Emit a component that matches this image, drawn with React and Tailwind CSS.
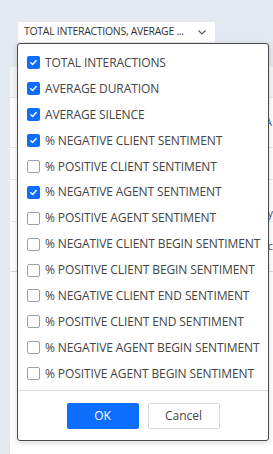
import { useState } from 'react'

const OPTIONS = [
  ['TOTAL INTERACTIONS', true],
  ['AVERAGE DURATION', true],
  ['AVERAGE SILENCE', true],
  ['% NEGATIVE CLIENT SENTIMENT', true],
  ['% POSITIVE CLIENT SENTIMENT', false],
  ['% NEGATIVE AGENT SENTIMENT', true],
  ['% POSITIVE AGENT SENTIMENT', false],
  ['% NEGATIVE CLIENT BEGIN SENTIMENT', false],
  ['% POSITIVE CLIENT BEGIN SENTIMENT', false],
  ['% NEGATIVE CLIENT END SENTIMENT', false],
  ['% POSITIVE CLIENT END SENTIMENT', false],
  ['% NEGATIVE AGENT BEGIN SENTIMENT', false],
  ['% POSITIVE AGENT BEGIN SENTIMENT', false],
]

const Check = ({ checked }) =>
  checked ? (
    <span className="w-[13px] h-[13px] rounded-[2px] bg-[#0d6efd] flex items-center justify-center shrink-0">
      <svg className="w-[9px] h-[9px]" viewBox="0 0 10 10" fill="none">
        <path d="M2 5.2l2 2 4-4.4" stroke="white" strokeWidth="1.6" strokeLinecap="round" strokeLinejoin="round" />
      </svg>
    </span>
  ) : (
    <span className="w-[13px] h-[13px] rounded-[2px] border border-[#9aa0a6] bg-white shrink-0"></span>
  )

export default function App() {
  const [items, setItems] = useState(OPTIONS)

  const toggle = (i) =>
    setItems(items.map((it, j) => (j === i ? [it[0], !it[1]] : it)))

  return (
    <div className="w-[273px] h-[454px] bg-[#e4e9f1] relative overflow-hidden" style={{ fontFamily: '"Open Sans", sans-serif' }}>
      {/* Trigger */}
      <div className="pt-[21px] pl-[17px]">
        <button className="w-[199px] h-[22px] bg-white border border-[#e6e8ec] flex items-center pl-[6px] pr-[8px] text-[10.5px] text-[#333] rounded-[2px]">
          <span className="flex-1 min-w-0 text-left whitespace-nowrap tracking-[-0.3px]">TOTAL INTERACTIONS, AVERAGE ...</span>
          <svg className="w-[10px] h-[10px] ml-1 shrink-0" viewBox="0 0 10 10" fill="none">
            <path d="M1.5 3.5L5 7l3.5-3.5" stroke="#555" strokeWidth="1.1" />
          </svg>
        </button>
      </div>

      {/* Table behind */}
      <div className="mt-[24px] ml-[10px] bg-white h-[400px]">
        <div className="h-[31px] bg-[#f4f5f7] border-b border-[#e5e7eb]"></div>
        <div className="h-[50px] border-b border-[#e5e7eb] flex items-center justify-end pr-[1px] text-[11px] text-[#3b6fb6]">A</div>
        <div className="h-[32px] border-b border-[#e5e7eb]"></div>
        <div className="h-[42px] border-b border-[#e5e7eb] flex items-end justify-end text-[11px] text-[#555]">y</div>
        <div className="h-[50px] border-b border-[#d6dde8] flex items-center justify-end text-[11px] text-[#555]">c</div>
      </div>

      {/* Dropdown */}
      <div className="absolute left-[17px] top-[43px] w-[252px] h-[398px] bg-white border border-[#4a4a4a] rounded-[3px] shadow-[0_2px_6px_rgba(0,0,0,0.15)] flex flex-col">
        <div className="pt-[6px] pl-[9px] flex flex-col">
          {items.map(([label, checked], i) => (
            <label
              key={label}
              onClick={() => toggle(i)}
              className="h-[25.9px] flex items-center gap-[5px] text-[12px] text-[#444] whitespace-nowrap cursor-pointer tracking-[-0.1px]"
            >
              <Check checked={checked} />
              <span>{label}</span>
            </label>
          ))}
        </div>
        <div className="mt-auto border-t border-[#dcdcdc] h-[50px] flex items-center justify-center gap-[9px]">
          <button className="w-[72px] h-[26px] bg-[#0d6efd] text-white text-[12px] rounded-[2px]">OK</button>
          <button className="w-[72px] h-[26px] bg-white border border-[#d9d9d9] text-[#444] text-[12px] rounded-[2px]">Cancel</button>
        </div>
      </div>
    </div>
  )
}
